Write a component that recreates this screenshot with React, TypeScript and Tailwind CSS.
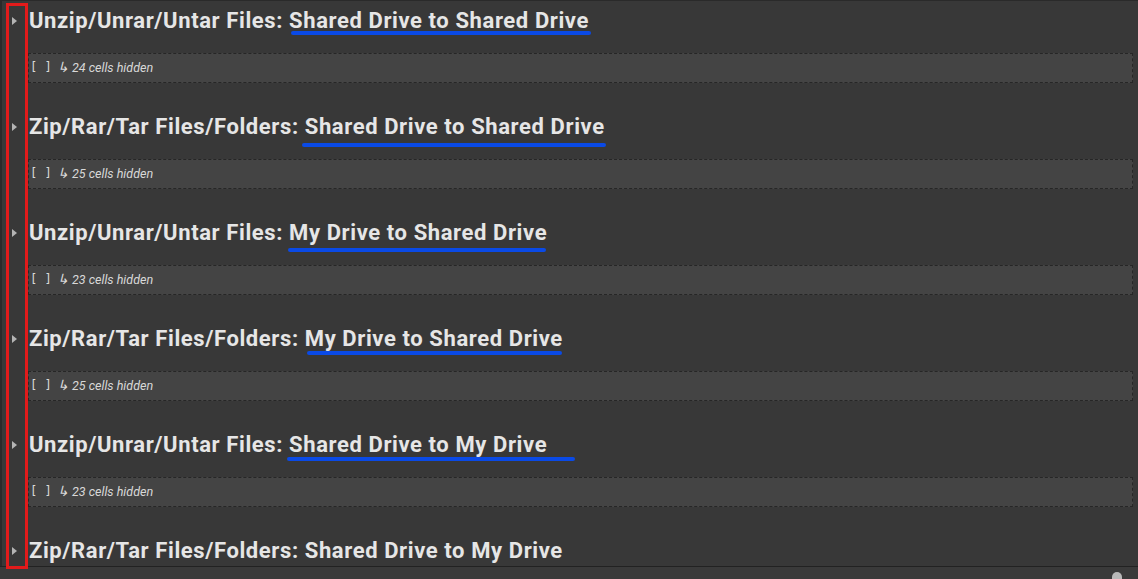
import React from "react";

type Section = {
  prefix: string;
  target: string;
  hidden?: number;
  // hand-drawn annotation under the target text
  mark?: { left: number; width: number; top: number };
};

const sections: Section[] = [
  { prefix: "Unzip/Unrar/Untar Files: ", target: "Shared Drive to Shared Drive", hidden: 24, mark: { left: 291, width: 300, top: 31 } },
  { prefix: "Zip/Rar/Tar Files/Folders: ", target: "Shared Drive to Shared Drive", hidden: 25, mark: { left: 302, width: 304, top: 143 - 106 } },
  { prefix: "Unzip/Unrar/Untar Files: ", target: "My Drive to Shared Drive", hidden: 23, mark: { left: 288, width: 258, top: 248 - 212 } },
  { prefix: "Zip/Rar/Tar Files/Folders: ", target: "My Drive to Shared Drive", hidden: 25, mark: { left: 307, width: 255, top: 351 - 318 } },
  { prefix: "Unzip/Unrar/Untar Files: ", target: "Shared Drive to My Drive", hidden: 23, mark: { left: 287, width: 288, top: 457 - 424 } },
  { prefix: "Zip/Rar/Tar Files/Folders: ", target: "Shared Drive to My Drive" },
];

function HiddenCells({ count }: { count: number }) {
  return (
    <div className="ml-[26px] mr-[5px] flex h-[30px] items-center border border-dashed border-[#262626] bg-[#444444] pb-[2px] pl-[1px] text-[12.5px] text-[#d8d8d8]">
      <span className="w-[28px] whitespace-pre font-['DejaVu_Sans_Mono',monospace] text-[12px]">
        {"[ ]"}
      </span>
      <span className="italic font-['Roboto',sans-serif]">
        <span className="-ml-[1px] mr-[3px] text-[14px]">↳</span>
        {count} cells hidden
      </span>
    </div>
  );
}

function SectionRow({ s }: { s: Section }) {
  return (
    <div className="relative h-[106px]">
      <div className="flex h-[53px] items-start pt-[5px]">
        <div className="flex w-[27px] justify-end pr-[12px] pt-[12px]">
          <svg width="5" height="8" viewBox="0 0 5 8">
            <path d="M0 0 L5 4 L0 8 Z" fill="#b4b4b4" />
          </svg>
        </div>
        <h2 className="whitespace-pre font-['Roboto',sans-serif] text-[22px] font-bold leading-[32px] tracking-[0.6px] text-[#e6e6e6]">
          {s.prefix}
          {s.target}
        </h2>
      </div>
      {s.hidden !== undefined && <HiddenCells count={s.hidden} />}
      {s.mark && (
        <div
          className="absolute h-[4px] rounded-full bg-[#0a4ae6]"
          style={{ left: s.mark.left - 2, width: s.mark.width, top: s.mark.top }}
        />
      )}
    </div>
  );
}

export default function App() {
  return (
    <div className="relative h-[579px] w-[1138px] overflow-hidden bg-[#383838]">
      <div className="h-[566px] overflow-hidden border-l-2 border-t border-[#2a2a2a]">
        <div className="-mt-px">
          {sections.map((s, i) => (
            <SectionRow key={i} s={s} />
          ))}
        </div>
      </div>
      <div className="flex h-[13px] items-end justify-end border-t border-[#222222] bg-[#3a3a3a] pr-[16px]">
        <div className="h-[7px] w-[10px] rounded-t-full bg-[#b8b8b8]" />
      </div>
      {/* red annotation box around the collapse arrows */}
      <div className="pointer-events-none absolute left-[6px] top-[3px] h-[566px] w-[22px] border-[3px] border-[#e21b1b]" />
    </div>
  );
}
